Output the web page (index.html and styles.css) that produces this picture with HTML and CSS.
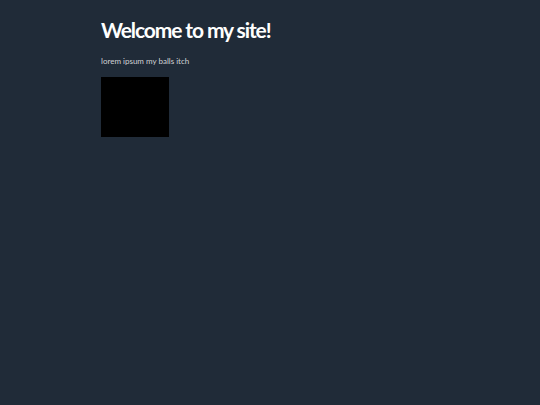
FILE: index.html
```html
<!DOCTYPE html>
<html>
<head>
<meta charset="utf-8">
<link rel="stylesheet" href="styles.css">
</head>
<body>
<main class="page">
  <h1 class="title">Welcome to my site!</h1>
  <p class="lead">lorem ipsum my balls itch</p>
  <div class="box"></div>
</main>
</body>
</html>
```
FILE: styles.css
```css
html, body {
  margin: 0;
  padding: 0;
  background: #202b38;
  height: 100%;
}
.page {
  padding: 17px 0 0 101px;
  font-family: Lato, "DejaVu Sans", sans-serif;
}
.title {
  margin: 0;
  color: #ffffff;
  font-size: 21px;
  font-weight: bold;
  line-height: 26px;
  letter-spacing: -1.1px;
}
.lead {
  margin: 13px 0 0 0;
  color: #d0d3d6;
  font-size: 8px;
  line-height: 10px;
}
.box {
  margin-top: 11px;
  width: 68px;
  height: 60px;
  background: #000000;
}
```
